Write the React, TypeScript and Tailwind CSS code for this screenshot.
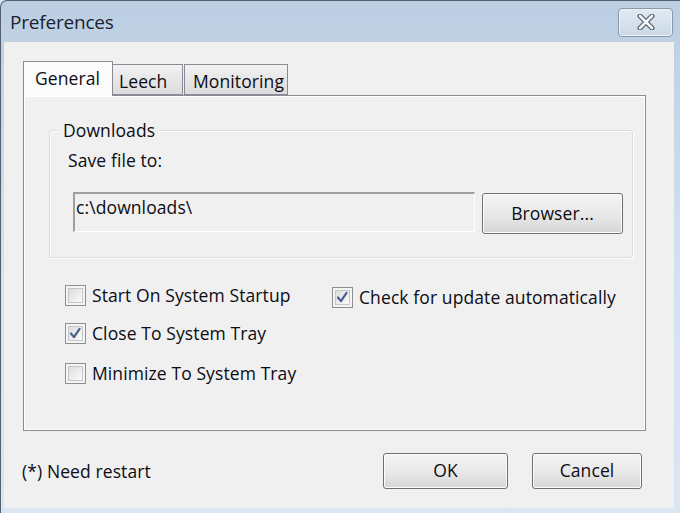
import React from 'react';

function CheckMark() {
  return (
    <svg viewBox="0 0 21 21" className="absolute inset-0 h-full w-full">
      <path d="M5.5 10.5 L8.8 14.5 L15 5.5" fill="none" stroke="#4a5e93" strokeWidth="2.4" strokeLinecap="round" strokeLinejoin="round" />
    </svg>
  );
}

function Checkbox({ label, checked }: { label: string; checked?: boolean }) {
  return (
    <div className="flex items-center h-[22px]">
      <div className="relative w-[21px] h-[21px] border border-[#8f8f8f] bg-[#f4f4f4]">
        <div className="absolute inset-[2px] border border-[#c6c6c6] bg-gradient-to-br from-[#dcdcdc] to-[#fbfbfb]" />
        {checked && <CheckMark />}
      </div>
      <span className="ml-[6px] leading-[22px]">{label}</span>
    </div>
  );
}

function Button({ label, className }: { label: string; className: string }) {
  return (
    <button
      className={
        'rounded-[3px] border border-[#707070] bg-gradient-to-b from-[#f4f4f4] via-[#e9e9e9] to-[#d6d6d6] shadow-[inset_0_0_0_1px_#fcfcfc] leading-none ' +
        className
      }
    >
      {label}
    </button>
  );
}

export default function App() {
  return (
    <div className="w-[680px] h-[513px] overflow-hidden bg-[#dbe6f3] font-['Open_Sans',sans-serif] text-[17.5px] tracking-[0.1px] text-[#0c0c14]">
      <div className="h-[513px] rounded-tl-[7px] border-l border-t border-[#55606e] bg-gradient-to-b from-[#bccee2] via-[#d3e1ef] to-[#dbe6f3] flex flex-col">
        {/* title bar */}
        <div className="h-[40px] flex items-center justify-between pl-[9px] pr-[7px]">
          <span className="mt-[3px] text-[19px] text-[#1b2230] tracking-[-0.2px]">Preferences</span>
          <button className="w-[55px] h-[29px] mt-[2px] rounded-[4px] border border-[#8a98ac] bg-gradient-to-b from-[#e2eaf3] to-[#cbd8e7] shadow-[inset_0_0_0_1px_#edf2f8] flex items-center justify-center">
            <svg viewBox="0 0 20 16" className="w-[20px] h-[16px]">
              <path d="M4 2 L16 14 M16 2 L4 14" stroke="#56606e" strokeWidth="5" strokeLinecap="round" />
              <path d="M4 2 L16 14 M16 2 L4 14" stroke="#f4f6f8" strokeWidth="2.6" strokeLinecap="round" />
            </svg>
          </button>
        </div>

        {/* client area */}
        <div className="ml-[3px] w-[670px] h-[467px] bg-[#f0f0f0] border-t border-[#c3d1e0] pt-[19px]">
          {/* tabs */}
          <div className="ml-[19px] flex items-end h-[34px]">
            <div className="relative z-10 -mb-px h-[35px] w-[90px] border border-b-0 border-[#898c95] bg-[#fbfbfb] pl-[11px] pt-[3px] leading-[26px]">
              General
            </div>
            <div className="h-[31px] w-[70px] border border-l-0 border-[#898c95] bg-gradient-to-b from-[#f2f2f2] to-[#dcdcdc] pl-[6px] pt-[3px] leading-[26px]">
              Leech
            </div>
            <div className="h-[31px] w-[104px] ml-px border border-[#898c95] bg-gradient-to-b from-[#f2f2f2] to-[#dcdcdc] pl-[8px] pt-[3px] leading-[26px]">
              Monitoring
            </div>
          </div>

          {/* tab panel */}
          <div className="ml-[19px] w-[623px] h-[336px] border border-[#898c95] shadow-[inset_1px_1px_0_#ffffff,inset_-1px_-1px_0_#ffffff] bg-[#f0f0f0]">
            {/* group box */}
            <div className="relative mt-[34px] ml-[25px] w-[584px] h-[128px] rounded-[3px] border border-[#d5dfe5] shadow-[1px_1px_0_#ffffff,inset_1px_1px_0_#ffffff] pt-[18px] pl-[18px]">
              <span className="absolute left-[9px] -top-[12px] px-[4px] bg-[#f0f0f0] leading-[22px]">Downloads</span>
              <div className="leading-[22px]">Save file to:</div>
              <div className="flex items-start mt-[21px] ml-[5px]">
                <div className="w-[402px] h-[40px] border-t-2 border-l-2 border-[#a0a0a0] border-r border-b border-r-[#ffffff] border-b-[#ffffff] pl-[1px] leading-[26px]">
                  c:\downloads\
                </div>
                <Button label="Browser..." className="ml-[7px] mt-px w-[141px] h-[41px]" />
              </div>
            </div>

            {/* options */}
            <div className="mt-[26px] ml-[41px] flex">
              <div className="w-[267px] flex flex-col">
                <Checkbox label="Start On System Startup" />
                <div className="mt-[16px]">
                  <Checkbox label="Close To System Tray" checked />
                </div>
                <div className="mt-[18px]">
                  <Checkbox label="Minimize To System Tray" />
                </div>
              </div>
              <div className="mt-[2px]">
                <Checkbox label="Check for update automatically" checked />
              </div>
            </div>
          </div>

          {/* bottom bar */}
          <div className="mt-[22px] flex items-center h-[36px]">
            <span className="flex-1 pl-[18px] leading-[22px]">(*) Need restart</span>
            <Button label="OK" className="w-[125px] h-[36px]" />
            <Button label="Cancel" className="ml-[24px] mr-[32px] w-[110px] h-[36px]" />
          </div>
        </div>
      </div>
    </div>
  );
}
